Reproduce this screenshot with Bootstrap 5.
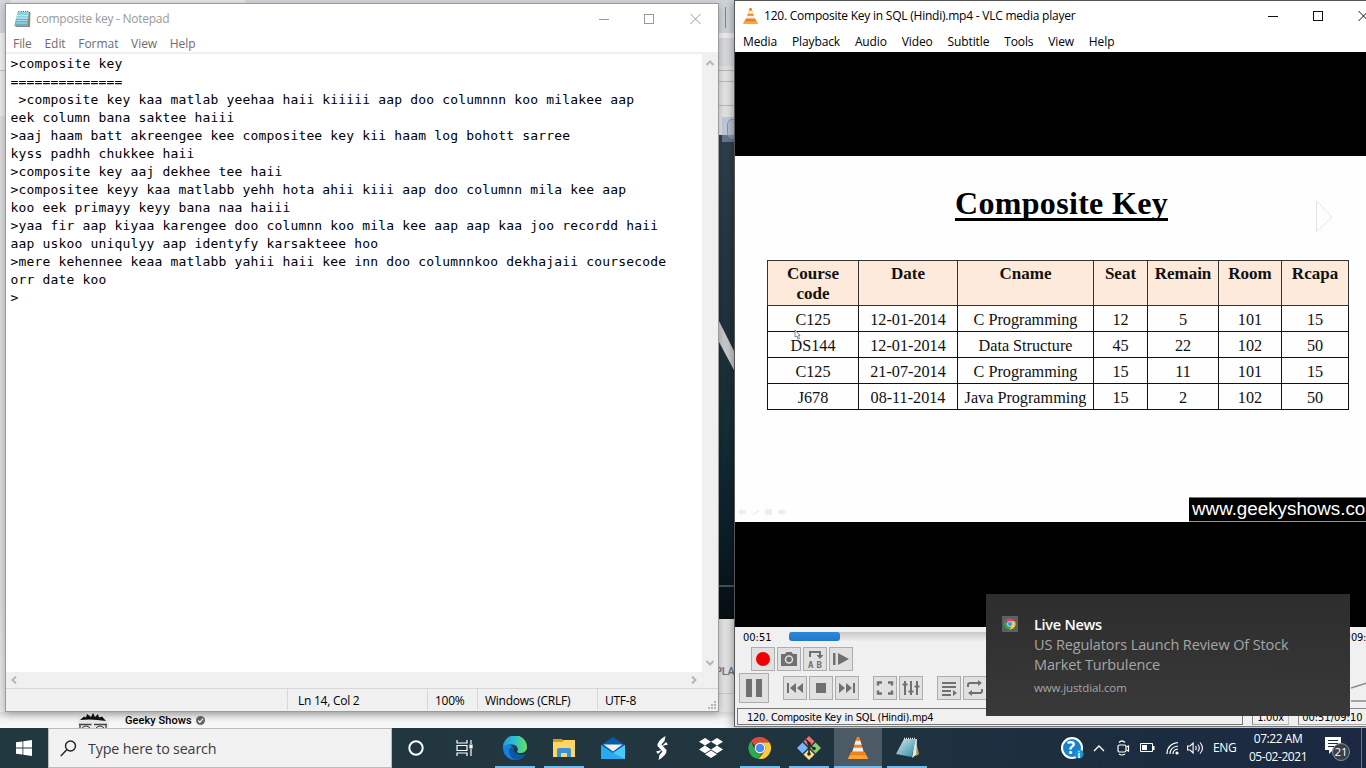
<!DOCTYPE html>
<html lang="en">
<head>
<meta charset="utf-8">
<meta name="viewport" content="width=device-width, initial-scale=1">
<title>Desktop</title>
<link href="https://cdn.jsdelivr.net/npm/bootstrap@5.3.0/dist/css/bootstrap.min.css" rel="stylesheet">
<style>
:root{--ui:"Open Sans","Noto Sans",sans-serif}
body{width:1366px;height:768px;font-family:var(--ui);font-size:12px;line-height:16px;color:#000;background:#f3f3f3}
svg{display:block;flex:none}
.desk{width:1366px;height:728px;overflow:hidden}
.win{position:absolute}
/* browser behind the windows */
.strip-l{left:0;top:0;width:6px;height:728px;background:linear-gradient(#d3d7dc 0 33px,#f0f0f0 33px 70px,#c4c4c4 70px 71px,#ececec 71px 116px,#dedede 116px 600px,#ececec)}
.strip-t{left:0;top:0;width:735px;height:3px;background:linear-gradient(90deg,#d5d9dd 0 10px,#e8e9eb 10px 245px,#d5d9dd 245px)}
.strip-b{left:0;top:712px;width:735px;height:16px;background:linear-gradient(#d9d9d9,#f2f2f2 7px,#f8f8f8)}
.channel{left:78px;top:712px;width:140px;height:16px;overflow:hidden;font-family:Roboto,sans-serif;font-weight:500;font-size:11px;letter-spacing:.08px}
.bplan{left:715px;top:664px;width:20px;font:500 11px/16px Roboto,sans-serif;color:#667788;letter-spacing:-.3px}
/* notepad */
.np{left:5px;top:3px;width:714px;height:709px;background:#fff;border:1px solid #9b9b9b;box-shadow:0 2px 8px rgba(0,0,0,.28)}
.np-title{height:30px;color:#999;padding-left:8px}
.np-title span{padding-left:5px;letter-spacing:-.26px}
.np-menu{padding:2px 0 0 7px;color:#6d6d6d;gap:12.7px;border-bottom:2px solid #f0f0f0;height:20px;letter-spacing:-.05px}
.np-text{height:618px;padding:1px 0 0 4.5px;margin:0;overflow:hidden;font:13px/18px "DejaVu Sans Mono",monospace;letter-spacing:.17px;color:#000}
.np-v{width:16px;background:#f0f0f0;padding:6px 0}
.np-h{height:16px;background:#f0f0f0;padding:0 20px 0 4px}
.np-status{height:23px;background:#f0f0f0;border-top:1px solid #d7d7d7}
.np-status>div{border-left:1px solid #d7d7d7;height:21px;padding-top:4px;letter-spacing:-.25px}
/* media player */
.vlc{left:734px;top:0;width:640px;height:727px;background:#f0f0f0;border:1px solid #555;border-bottom-color:#777;box-shadow:-2px 2px 8px rgba(0,0,0,.3)}
.vlc-title{height:30px;background:#fff;padding-left:8px}
.vlc-menu{height:21px;background:#fff;padding:3px 0 0 8px;letter-spacing:-.1px;gap:14.8px}
.vlc-small{font-family:"DejaVu Sans Condensed","DejaVu Sans",sans-serif;font-stretch:condensed;font-size:11px;letter-spacing:-.25px}
.slide{height:366px;width:631px;background:#fefefe;font-family:"Liberation Serif",serif;font-size:17px;line-height:20px}
.slide h1{font:bold 32px/36px "Liberation Serif",serif;margin:0;padding-top:29px;width:653px;text-align:center;text-decoration:underline;text-decoration-thickness:2.5px;text-underline-offset:4px;text-decoration-skip-ink:none;letter-spacing:.32px}
.slide table{margin:39px 0 0 32px;width:581px;table-layout:fixed;border-collapse:collapse;color:#111}
.slide th{background:#fdeada;height:45px;vertical-align:top;padding:3px 0 0;border:1px solid #333}
.slide td{height:26px;border:1px solid #111;padding:2px 0 0;font-size:16.2px}
.next{left:581px;top:44px}
.ghosts{left:2px;top:351px}
.cursor{left:59px;top:173px}
.site{right:0;bottom:0;width:177px;height:25px;background:#000;color:#fff;border-top:1px solid #777;border-bottom:1px solid #999;overflow:hidden;white-space:nowrap;font:18.8px/21px "Liberation Sans",sans-serif;padding-left:3px}
.groove{width:562px;height:9px;margin-top:-2px;border-radius:3px;background:linear-gradient(#c9c9c9,#ededed)}
.played{height:9px;border-radius:3px;background:linear-gradient(#2f86d6,#1f78cc)}
.vb{width:24px;height:24px;background:#e1e1e1;border:1px solid #adadad}
.vb-lg{width:30px;height:30px}
.sunk{border:1px solid #888;border-right-color:#bbb;border-bottom-color:#aaa;height:17px;line-height:17px;overflow:hidden;white-space:nowrap}
/* toast */
.note{left:986px;top:594px;width:364px;height:122px;background:linear-gradient(#2d2d2d,#393939);color:#a6a6a6;padding:21px 16px;gap:16px;font-size:14.5px;line-height:20px;letter-spacing:-.12px}
.note-ic{width:16px;height:16px;background:#5d6063;margin-top:1px}
/* taskbar */
.bar{height:40px;background:linear-gradient(90deg,#22383f,#21363f 50%,#1d2f3e 75%,#1b2842);color:#fff}
.find{width:344px;height:40px;background:#f2f2f2;border:1px solid #bbb;padding-left:11px;color:#3b3b3b;font-size:14.3px;letter-spacing:-.17px}
.tb{width:48px;height:40px;position:relative;margin-right:1px}
.tb.run::after{content:"";position:absolute;left:4px;right:4px;bottom:0;height:2px;background:#76b9ed}
.tb.act{background:#4c5a66}
.tb.act::after{left:0;right:0}
</style>
</head>
<body class="overflow-hidden">
<svg width="0" height="0" class="position-absolute">
  <defs>
    <symbol id="chrome" viewBox="0 0 24 24">
      <path fill="#e04a3c" d="M12 1a11 11 0 0 1 9.600 5.600H12A5.400 5.400 0 0 0 7 10L3 4.900A11 11 0 0 1 12 1z"/>
      <path fill="#2da94f" d="M3 4.900 7.300 14.700A5.400 5.400 0 0 0 13.500 17.200L10.500 22.900A11 11 0 0 1 3 4.900z"/>
      <path fill="#fbcb3e" d="M12 6.600h9.600A11 11 0 0 1 10.500 22.900l6.200-8.200A5.400 5.400 0 0 0 12 6.600z"/>
      <circle cx="12" cy="12" r="5.400" fill="#fff"/><circle cx="12" cy="12" r="4.300" fill="#4a8af4"/>
    </symbol>
    <symbol id="cone" viewBox="0 0 20 22">
      <path fill="#f58220" d="M3 15h14l3 7H0z"/><path fill="#ffa530" d="M1.500 18.500h17L20 22H0z"/>
      <path fill="#f0801c" d="M8.700 0h2.600l4.900 16.500q-6.200 2.600-12.400 0z"/>
      <path fill="#eee" d="M7.600 3.800h4.800l1.200 4H6.400zM5.500 10.800h9l1.100 3.600H4.400z"/>
    </symbol>
    <symbol id="pad" viewBox="0 0 16 18">
      <path fill="#8a8a7a" d="M4 2h12l-.5 15H1z"/><path fill="#8fd0e0" d="M3 2h11.500L12.800 16H0z"/>
      <path fill="#5fb2cc" d="M1.500 9h12l-.7 7H0z"/>
      <path stroke="#d6f0f6" stroke-width=".7" d="M2.600 5.500h11M2.200 8h11M1.800 10.500h11M1.400 13h11"/>
      <path stroke="#444" stroke-width="1.200" stroke-dasharray="1 1.200" d="M4 1.500h11"/>
    </symbol>
  </defs>
</svg>

<main class="desk position-relative">
  <div class="win strip-l"></div>
  <div class="win strip-t"></div>
  <div class="win strip-b"></div>
  <svg class="win" style="left:719px;top:0" width="16" height="728">
    <defs><linearGradient id="hero" x2="0" y2="1"><stop stop-color="#2e414c"/><stop offset=".4" stop-color="#21323e"/><stop offset=".6" stop-color="#162f36"/><stop offset=".8" stop-color="#0c222c"/><stop offset="1" stop-color="#080f14"/></linearGradient></defs>
    <path fill="#d0d5da" d="M0 0h16v33H0z"/><path fill="#f0f0f0" d="M0 33h16v5H0z"/><path fill="#dadbdd" d="M0 38h16v28H0z"/><path fill="#e6e6e6" d="M0 66h16v70H0z"/>
    <path stroke="#bcbcbc" d="M0 70.500h16M0 81.500h16M0 105.500h16"/><path stroke="#85898e" d="M6.500 7v21"/>
    <path fill="url(#hero)" d="M0 135h16v484H0z"/>
    <path fill="#c4cddc" d="M3 117h13v18H3z"/><path fill="#66788d" d="M3 135h13v7H3z"/><rect x="8.500" y="119.500" width="14" height="19" rx="5" fill="#b0bdd0" fill-opacity=".5" stroke="#8496b5"/>
    <path fill="#ccccd0" d="M0 321l16 32v19L0 342z"/><path stroke="#40545e" stroke-width="2" d="M0 586h16"/>
    <path fill="#e5e5e5" d="M0 619h16v93H0z"/><path stroke="#ccc" d="M0 693.500h16"/>
  </svg>
  <div class="win bplan">PLA</div>
  <div class="win channel d-flex align-items-center">
    <svg width="31" height="16" class="me-3"><circle cx="15" cy="16" r="17" fill="#e9e9e9"/><path fill="#111" d="M2 8 6 4.500 8 5.500l1-3.500 4 3 2-4 2 4 3-3 1 3.500 3-1 4 4.500Q14 6.500 2 8z"/><path fill="none" stroke="#444" stroke-width="1.300" d="M1 12.500h12.500M16 12.500h13M2 16v-3M28 16v-3"/><path fill="none" stroke="#333" d="M4 16q4-4 8 0M18 16q4-4 8 0"/></svg>
    <span style="padding-top:1px">Geeky Shows</span>
    <svg width="9" height="9" viewBox="0 0 10 10" class="ms-1"><circle cx="5" cy="5" r="5" fill="#666"/><path d="M2.500 5 4.300 7 7.700 3" fill="none" stroke="#fff" stroke-width="1.300"/></svg>
  </div>

  <section class="win np d-flex flex-column">
    <header class="np-title d-flex align-items-center">
      <svg width="17" height="18"><use href="#pad"/></svg><span>composite key - Notepad</span>
      <svg class="ms-auto me-3" width="104" height="12" fill="none" stroke="#999"><path d="M1 6.500h10M92.500 1l10 10M102.500 1l-10 10"/><rect x="46.500" y="1.500" width="9" height="9"/></svg>
    </header>
    <nav class="np-menu d-flex"><span>File</span><span>Edit</span><span>Format</span><span>View</span><span>Help</span></nav>
    <div class="d-flex">
<pre class="np-text flex-grow-1">&gt;composite key
==============
 &gt;composite key kaa matlab yeehaa haii kiiiii aap doo columnnn koo milakee aap
eek column bana saktee haiii
&gt;aaj haam batt akreengee kee compositee key kii haam log bohott sarree
kyss padhh chukkee haii
&gt;composite key aaj dekhee tee haii
&gt;compositee keyy kaa matlabb yehh hota ahii kiii aap doo columnn mila kee aap
koo eek primayy keyy bana naa haiii
&gt;yaa fir aap kiyaa karengee doo columnn koo mila kee aap aap kaa joo recordd haii
aap uskoo uniqulyy aap identyfy karsakteee hoo
&gt;mere kehennee keaa matlabb yahii haii kee inn doo columnnkoo dekhajaii coursecode
orr date koo
&gt;</pre>
      <div class="np-v d-flex flex-column justify-content-between align-items-center">
        <svg width="8" height="6" fill="none" stroke="#b5b5b5" stroke-width="2"><path d="M.5 5 4 1.500 7.500 5"/></svg>
        <svg width="8" height="6" fill="none" stroke="#b5b5b5" stroke-width="2"><path d="M.5 1 4 4.500 7.500 1"/></svg>
      </div>
    </div>
    <div class="np-h d-flex justify-content-between align-items-center">
      <svg width="7" height="8" fill="none" stroke="#b5b5b5" stroke-width="2"><path d="M6 .5 2.500 4 6 7.500"/></svg>
      <svg width="7" height="8" fill="none" stroke="#b5b5b5" stroke-width="2"><path d="M1 .5 4.500 4 1 7.500"/></svg>
    </div>
    <footer class="np-status d-flex position-relative">
      <div style="margin-left:281px;width:140px;padding-left:10px">Ln 14, Col 2</div><div style="width:50px;padding-left:7px">100%</div><div style="width:120px;padding-left:7px">Windows (CRLF)</div><div class="flex-grow-1" style="padding-left:7px">UTF-8</div>
      <svg class="position-absolute end-0 bottom-0" style="margin:2px" width="8" height="8" fill="#b5b5b5"><path d="M6 0h2v2H6zM3 3h2v2H3zM6 3h2v2H6zM0 6h2v2H0zM3 6h2v2H3zM6 6h2v2H6z"/></svg>
    </footer>
  </section>

  <section class="win vlc">
    <header class="vlc-title d-flex align-items-center">
      <svg width="15" height="16"><use href="#cone"/></svg><span class="text-nowrap" style="width:311px;margin-left:6px;letter-spacing:-.23px">120. Composite Key in SQL (Hindi).mp4 - VLC media player</span>
      <svg style="margin-left:192px" width="110" height="12" fill="none" stroke="#111"><path d="M1 6.500h10M91.500 1l10 10M101.500 1l-10 10"/><rect x="46.500" y="1.500" width="9" height="9"/></svg>
    </header>
    <nav class="vlc-menu d-flex"><span>Media</span><span>Playback</span><span>Audio</span><span>Video</span><span>Subtitle</span><span>Tools</span><span>View</span><span>Help</span></nav>
    <div class="bg-black" style="height:104px"></div>
    <div class="slide position-relative">
      <h1>Composite Key</h1>
      <table class="text-center">
        <colgroup><col style="width:91px"><col style="width:99px"><col style="width:136px"><col style="width:54px"><col style="width:71px"><col style="width:63px"><col style="width:67px"></colgroup>
        <thead><tr><th>Course<br>code</th><th>Date</th><th>Cname</th><th>Seat</th><th>Remain</th><th>Room</th><th>Rcapa</th></tr></thead>
        <tbody>
          <tr><td>C125</td><td>12-01-2014</td><td>C Programming</td><td>12</td><td>5</td><td>101</td><td>15</td></tr>
          <tr><td>DS144</td><td>12-01-2014</td><td>Data Structure</td><td>45</td><td>22</td><td>102</td><td>50</td></tr>
          <tr><td>C125</td><td>21-07-2014</td><td>C Programming</td><td>15</td><td>11</td><td>101</td><td>15</td></tr>
          <tr><td>J678</td><td>08-11-2014</td><td>Java Programming</td><td>15</td><td>2</td><td>102</td><td>50</td></tr>
        </tbody>
      </table>
      <svg class="position-absolute next" width="18" height="34" fill="none" stroke="#e2e2e2"><path d="M.5 1v31L16 17z"/></svg>
      <svg class="position-absolute cursor" width="7" height="11"><path d="M1 1v7l2-1 1 3 1.500-.5L4.500 6.500H6z" fill="#fff" stroke="#666" stroke-width=".8"/></svg>
      <svg class="position-absolute ghosts" width="60" height="10" fill="#eee"><path d="M1 5l4-4v2h4v4H5v2zM15 8l6-5 1 1-5 4zM28 2h7v6h-7zM49 5l-4-4v2h-4v4h4v2z"/></svg>
      <div class="position-absolute site">www.geekyshows.co</div>
    </div>
    <div class="bg-black" style="height:105px"></div>
    <div class="d-flex align-items-center vlc-small" style="height:20px;padding-left:8px">
      <span style="width:46px;padding-top:1px;letter-spacing:0">00:51</span>
      <div class="groove"><div class="played" style="width:51px"></div></div>
      <span class="ms-auto" style="width:22px;padding-top:1px">09:10</span>
    </div>
    <div class="d-flex" style="gap:2px;padding-left:16px">
      <div class="vb"><svg width="22" height="22"><circle cx="11" cy="11" r="7" fill="#f00000"/></svg></div>
      <div class="vb"><svg width="22" height="22"><path fill="#707070" d="M3 6h4l1.500-2h5L15 6h4v12H3z"/><circle cx="11" cy="11.500" r="3.500" fill="none" stroke="#e1e1e1" stroke-width="1.500"/></svg></div>
      <div class="vb"><svg width="22" height="22"><path fill="none" stroke="#707070" stroke-width="2" d="M6 9V4h10v4"/><path fill="#707070" d="M12.500 7h7L16 11z"/><text x="4" y="20" font-family="DejaVu Sans Mono,monospace" font-weight="bold" font-size="9" fill="#707070">A</text><text x="12.500" y="20" font-family="DejaVu Sans Mono,monospace" font-weight="bold" font-size="9" fill="#707070">B</text></svg></div>
      <div class="vb"><svg width="22" height="22" fill="#707070"><path d="M3 5h2.500v12H3zM8 5l11 6-11 6z"/></svg></div>
    </div>
    <div class="d-flex align-items-center" style="height:30px;margin-top:2px;padding-left:4px;gap:2px">
      <div class="vb vb-lg"><svg width="28" height="28" fill="#707070"><path d="M6 5h6v18H6zM16 5h6v18h-6z"/></svg></div>
      <div class="vb" style="margin-left:12px"><svg width="22" height="22" fill="#707070"><path d="M3 6h2v10H3zM12 6v10l-6-5zM19 6v10l-6-5z"/></svg></div>
      <div class="vb"><svg width="22" height="22" fill="#707070"><path d="M6 6h10v10H6z"/></svg></div>
      <div class="vb"><svg width="22" height="22" fill="#707070"><path d="M17 6h2v10h-2zM10 6v10l6-5zM3 6v10l6-5z"/></svg></div>
      <div class="vb" style="margin-left:12px"><svg width="22" height="22" fill="none" stroke="#707070" stroke-width="2.400"><path d="M4 8.500V5.500h4M14 5.500h4v3M18 13.500v3h-4M8 16.500H4v-3"/></svg></div>
      <div class="vb"><svg width="22" height="22" fill="none" stroke="#707070" stroke-width="2"><path d="M5 4v14M11 4v14M17 4v14M2.500 7.500h5M8.500 14.500h5M14.500 9.500h5"/></svg></div>
      <div class="vb" style="margin-left:12px"><svg width="22" height="22" fill="#707070"><path d="M4 5h14v2H4zM4 9h14v2H4zM4 13h9v2H4zM4 17h9v2H4zM15 13l4 3-4 3z"/></svg></div>
      <div class="vb"><svg width="22" height="22"><path fill="none" stroke="#707070" stroke-width="2" d="M4 10V8q0-2 2-2h9M18 12v2q0 2-2 2H7"/><path fill="#707070" d="M14 3l4 3-4 3zM8 13l-4 3 4 3z"/></svg></div>
      <svg style="margin-left:362px" width="16" height="30" fill="none" stroke="#888" stroke-width="1.500"><path d="M0 15l16-5M0 28h16"/></svg>
    </div>
    <div class="d-flex vlc-small" style="margin:5px 0 0 2px">
      <div class="sunk" style="width:507px;padding-left:9px;border-color:#777">120. Composite Key in SQL (Hindi).mp4</div>
      <div class="sunk" style="width:37px;padding-left:4px;margin-left:9px">1.00x</div>
      <div class="sunk" style="width:75px;padding-left:3px;margin-left:9px;letter-spacing:0">00:51/09:10</div>
    </div>
  </section>

  <aside class="win note d-flex">
    <div class="note-ic d-flex align-items-center justify-content-center"><svg width="12" height="12"><use href="#chrome"/></svg></div>
    <div><div class="text-white fw-semibold" style="letter-spacing:-.28px">Live News</div><div style="width:280px">US Regulators Launch Review Of Stock<br>Market Turbulence</div><div style="font-size:11.500px;margin-top:3px">www.justdial.com</div></div>
  </aside>
</main>

<footer class="bar d-flex align-items-center">
  <div class="d-flex align-items-center justify-content-center" style="width:48px;height:40px"><svg width="16" height="16" fill="#fff"><path d="M0 2.300 6.500 1.400v6.200H0zM7.300 1.300 16 0v7.600H7.300zM0 8.400h6.500v6.200L0 13.700zM7.300 8.400H16V16l-8.700-1.300z"/></svg></div>
  <div class="find d-flex align-items-center"><svg width="17" height="17" fill="none" stroke="#222" stroke-width="1.400"><circle cx="10.500" cy="6" r="5"/><path d="M7 9.500.8 16"/></svg><span style="padding-left:11px;padding-top:1px">Type here to search</span></div>
  <div class="tb d-flex align-items-center justify-content-center m-0"><svg width="16" height="16"><circle cx="8" cy="8" r="6.700" fill="none" stroke="#fff" stroke-width="2"/></svg></div>
  <div class="tb d-flex align-items-center justify-content-center" style="margin-right:3px"><svg width="17" height="16" fill="none" stroke="#fff" stroke-width="1.200"><path d="M1 0v3h10V0M1 16v-3h10v3M1 5.500h10v5H1zM15 0v4M15 9v7"/><path fill="#fff" d="M14 5h2v3h-2z"/></svg></div>
  <div class="tb run d-flex align-items-center justify-content-center"><svg width="24" height="24" viewBox="0 0 24 24"><defs><linearGradient id="eg" x2="1"><stop stop-color="#1b9fe0"/><stop offset=".5" stop-color="#2cc0cf"/><stop offset="1" stop-color="#6be05a"/></linearGradient></defs><path fill="#1583dc" d="M0 12C0 8 6 7.500 9.500 10.500 7 14 10 19 15 20c3 .5 5-.5 7.500-2C20 22 16.500 24 12 24A12 12 0 0 1 0 12z"/><path fill="#0b57a8" d="M9.500 10.500C3 13 6 22 13 24c4 0 7.500-2 9.500-6-3 1.500-6 1.500-8.500 0-3.500-2-4-5-2-7z"/><path fill="url(#eg)" d="M0 12A12 12 0 0 1 24 10.500c.2 4.500-3 6.500-7 6.500-2 0-3.500-.8-2.700-2 1.500-2 0-6-5-6.500C5 8 1 9 0 12z"/></svg></div>
  <div class="tb run d-flex align-items-center justify-content-center"><svg width="22" height="20"><path fill="#d99a12" d="M0 1h9l2 2v3H0z"/><path fill="#ffd666" d="M0 4h9l2-2h11v17H0z"/><path fill="#3a8fd6" d="M4 19v-7q0-2 2-2h10q2 0 2 2v7h-4v-4H8v4z"/></svg></div>
  <div class="tb d-flex align-items-center justify-content-center"><svg width="24" height="24"><path fill="#0a5ba8" d="M0 9 12 1l12 8v14H0z"/><path fill="#29a9ee" d="M0 9v14h24V9L12 17z"/><path fill="#4cc8fa" d="M24 9v14L12 17z"/><path fill="#f2f2f2" d="M2.500 8.500h19L12 15.500z"/></svg></div>
  <div class="tb d-flex align-items-center justify-content-center"><svg width="12" height="24" fill="#fff"><path d="M9.500 0Q1 5 1.500 10l5 5.500L3.500 19l-1 5Q11 19 10.500 14l-5-5.500L8.500 5z"/><path d="M0 15.500 6 14l-4 4zM12 8.500 6 10l4-4z"/></svg></div>
  <div class="tb d-flex align-items-center justify-content-center"><svg width="24" height="20" fill="#fff"><path d="M6 0l6 3.800-6 3.800L0 3.800zM18 0l6 3.800-6 3.800-6-3.800zM6 7.600l6 3.800-6 3.800-6-3.800zM18 7.600l6 3.800-6 3.800-6-3.800zM12 12.600l6 3.700-6 3.700-6-3.700z"/></svg></div>
  <div class="tb run d-flex align-items-center justify-content-center"><svg width="24" height="24"><use href="#chrome"/></svg></div>
  <div class="tb run d-flex align-items-center justify-content-center"><svg width="24" height="24"><path fill="#f0707a" d="M12 0l5.500 5.500L12 11 6.500 5.500z"/><path fill="#7ab3ff" d="M5.500 6.500 11 12l-5.500 5.500L0 12z"/><path fill="#8bd06a" d="M18.500 6.500 24 12l-5.500 5.500L13 12z"/><path fill="#f7e08a" d="M12 13l5.500 5.500L12 24l-5.500-5.500z"/><path fill="none" stroke="#2a2a2a" stroke-width="1.600" d="M9 3.500 12 7v11M12 8l5 5"/><g fill="#2a2a2a"><circle cx="12" cy="7.500" r="1.800"/><circle cx="12" cy="18" r="1.800"/><circle cx="17" cy="12.500" r="1.800"/></g></svg></div>
  <div class="tb run act d-flex align-items-center justify-content-center"><svg width="20" height="22"><use href="#cone"/></svg></div>
  <div class="tb run d-flex align-items-center justify-content-center m-0"><svg width="23" height="22" viewBox="0 0 23 22"><defs><linearGradient id="pg" x2="1" y2="1"><stop stop-color="#d5edf2"/><stop offset=".5" stop-color="#7fb9c8"/><stop offset="1" stop-color="#2f8aa3"/></linearGradient></defs><path fill="#b39a62" d="M19.500 3l3.500 14-3 2z"/><path fill="#e4e8e4" d="M19 2h2l-1 16-4 3z"/><path fill="url(#pg)" d="M8 2h12l-4.500 18L0 17z"/><path stroke="#eee" stroke-width="1.300" stroke-dasharray="1 1" d="M8 1.500h12"/></svg></div>
  <div class="d-flex align-items-center ms-auto" style="width:306px">
    <svg width="24" height="24"><circle cx="12" cy="12" r="10" fill="#1583c9" stroke="#fff" stroke-width="2"/><text x="7" y="18" font-family="Open Sans,sans-serif" font-weight="bold" font-size="17" fill="#fff">?</text><circle cx="19" cy="18" r="4.500" fill="#1b91d8"/><text x="17.500" y="21.500" font-family="Open Sans,sans-serif" font-weight="bold" font-size="9" fill="#fff">i</text></svg>
    <svg style="margin-left:9px" width="12" height="8" fill="none" stroke="#fff" stroke-width="1.300"><path d="M1 7l5-5 5 5"/></svg>
    <svg style="margin-left:11px" width="14" height="16" fill="none" stroke="#fff" stroke-width="1.200"><path d="M3 2.500q3-3 6 0M3 14q3 2 6 0M10.500 7l2-1v5l-2-1"/><rect x="2" y="5" width="8" height="7" rx="1.500"/></svg>
    <svg style="margin-left:10px" width="15" height="10"><path fill="none" stroke="#fff" d="M.5.500h12v8H.5z"/><path fill="#fff" d="M2 2h5v5H2zM13 3h1.500v4H13z"/></svg>
    <svg style="margin-left:11px" width="14" height="14" fill="none" stroke="#fff" stroke-width="1.200"><path d="M1 13Q1 3 12 1.500M4 13q0-7 8-8M7 13q0-4.500 5-5"/><circle cx="11" cy="12" r="1" fill="#fff"/></svg>
    <svg style="margin-left:7px" width="17" height="14" fill="none" stroke="#fff" stroke-width="1.100"><path d="M.6 5h2.500l3-3v10l-3-3H.6zM8.500 5q1.500 2 0 4M10.800 3.500q3 3.500 0 7M13 1.500q5 5.500 0 11"/></svg>
    <span style="margin-left:9px;letter-spacing:-.3px;width:24px">ENG</span>
    <div class="text-center text-nowrap" style="margin-left:10px;width:62px;line-height:18px;letter-spacing:-.45px;padding-bottom:1px">07:22 AM<br>05-02-2021</div>
    <svg style="margin-left:16px" width="28" height="26"><path fill="#fff" d="M0 2h16v13H8l-4 4v-4H0z"/><path stroke="#1c2a42" d="M3 5.500h10M3 8.500h10M3 11.500h7"/><circle cx="16" cy="17" r="8.500" fill="#3a4048" stroke="#8b9098"/><text x="16" y="21" text-anchor="middle" font-family="Open Sans,sans-serif" font-size="11.500" fill="#fff">21</text></svg>
    <div class="ms-auto me-1" style="width:1px;height:40px;background:#6f7785"></div>
  </div>
</footer>
<script src="https://cdn.jsdelivr.net/npm/bootstrap@5.3.0/dist/js/bootstrap.bundle.min.js"></script>
</body>
</html>
